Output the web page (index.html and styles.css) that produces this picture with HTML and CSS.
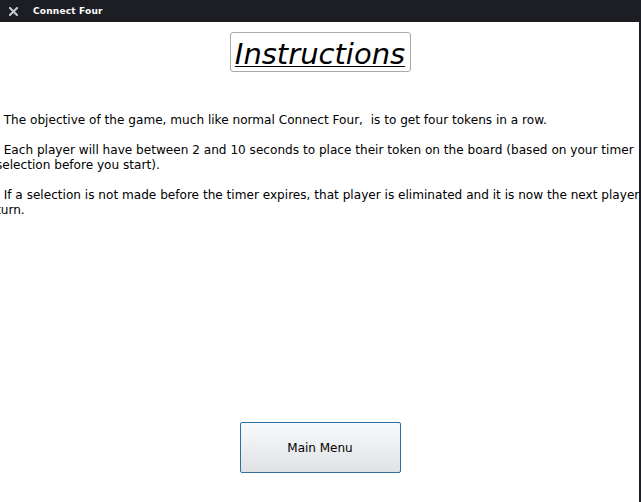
FILE: index.html
```html
<!DOCTYPE html>
<html>
<head>
<meta charset="utf-8">
<link rel="stylesheet" href="styles.css">
</head>
<body>
<div class="window">
  <div class="titlebar">
    <svg class="close" width="9" height="9" viewBox="0 0 9 9"><path d="M1 1L8 8M8 1L1 8" stroke="#c9cacd" stroke-width="2" stroke-linecap="square"/></svg>
    <span class="title">Connect Four</span>
  </div>
  <div class="client">
    <div class="content">
      <div class="heading-row">
        <h1 class="heading">Instructions</h1>
      </div>
      <div class="text">  The objective of the game, much like normal Connect Four,  is to get four tokens in a row.

  Each player will have between 2 and 10 seconds to place their token on the board (based on your timer selection before you start).

  If a selection is not made before the timer expires, that player is eliminated and it is now the next player's turn.</div>
      <div class="button-row">
        <button class="menu-button">Main Menu</button>
      </div>
    </div>
    <div class="edge"></div>
  </div>
</div>
</body>
</html>
```

FILE: styles.css
```css
html, body {
  margin: 0;
  padding: 0;
  width: 641px;
  height: 502px;
  overflow: hidden;
  background: #ffffff;
}

.window {
  display: flex;
  flex-direction: column;
  width: 641px;
  height: 502px;
}

.titlebar {
  height: 22px;
  flex: none;
  background: #1d1e24;
  display: flex;
  align-items: center;
  font-family: "DejaVu Sans", sans-serif;
}

.close {
  display: block;
  margin-left: 9px;
  flex: none;
}

.title {
  color: #ffffff;
  font-size: 9px;
  font-weight: bold;
  margin-left: 15px;
  letter-spacing: 0.2px;
}

.client {
  flex: 1;
  display: flex;
  min-height: 0;
}

.content {
  flex: 1;
  display: flex;
  flex-direction: column;
  overflow: hidden;
  min-width: 0;
}

.edge {
  width: 2px;
  flex: none;
  background: #1d1e24;
}

.heading-row {
  display: flex;
  justify-content: center;
  padding-top: 10px;
  padding-left: 1px;
}

.heading {
  margin: 0;
  box-sizing: border-box;
  width: 181px;
  height: 40px;
  border: 1px solid #a9a9a9;
  border-radius: 3px;
  font-family: "DejaVu Sans", sans-serif;
  font-style: italic;
  font-weight: normal;
  font-size: 29px;
  line-height: 42px;
  text-align: center;
  text-decoration: underline;
  text-decoration-thickness: 1px;
  text-underline-offset: 2px;
  color: #000000;
  white-space: nowrap;
}

.text {
  margin-top: 41px;
  margin-left: -4px;
  width: 664px;
  flex: none;
  white-space: pre-wrap;
  font-family: "DejaVu Sans", sans-serif;
  font-size: 12.1px;
  line-height: 15px;
  color: #000000;
}

.button-row {
  margin-top: auto;
  display: flex;
  justify-content: center;
  padding-bottom: 29px;
  padding-left: 1px;
}

.menu-button {
  box-sizing: border-box;
  width: 161px;
  height: 51px;
  border: 1px solid #2f6fa0;
  border-radius: 2px;
  background: linear-gradient(#f8f9fa, #dfe3e6);
  font-family: "DejaVu Sans", sans-serif;
  font-size: 12px;
  color: #000000;
  padding: 0;
}
```
